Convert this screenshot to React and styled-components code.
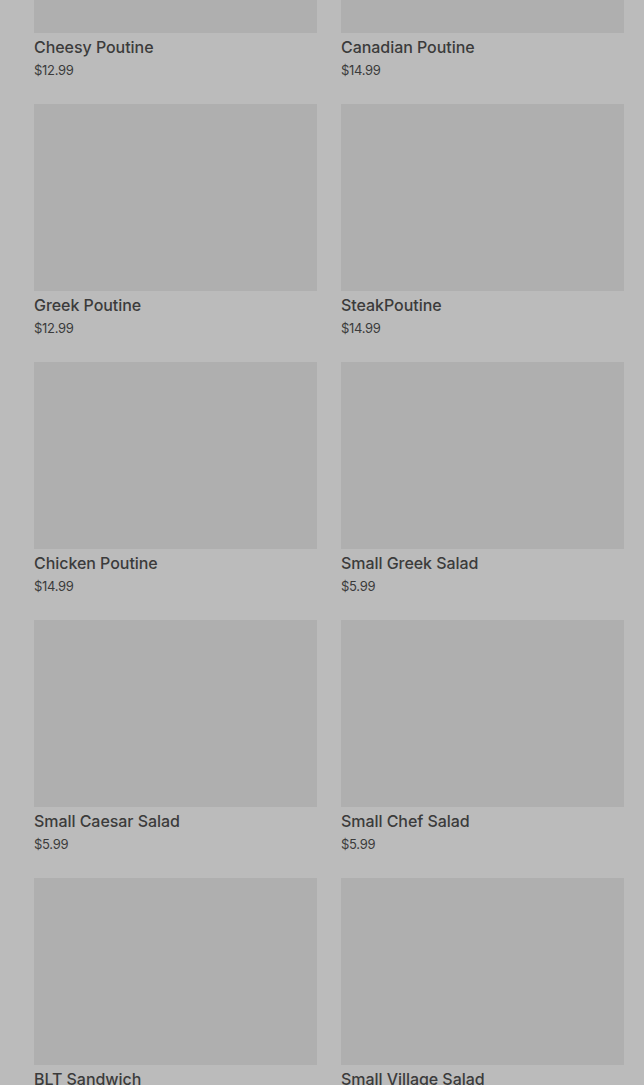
import React from 'react';
import styled, { createGlobalStyle } from 'styled-components';

const GlobalStyle = createGlobalStyle`
  html, body {
    margin: 0;
    padding: 0;
    background: #bbbbbb;
    overflow: hidden;
  }
  body {
    font-family: Inter, Roboto, "Liberation Sans", sans-serif;
  }
`;

const Page = styled.div`
  height: 1085px;
  overflow: hidden;
  padding: 0 20px 0 34px;
`;

const Grid = styled.div`
  display: grid;
  grid-template-columns: 283px 283px;
  column-gap: 24px;
  row-gap: 24px;
  margin-top: -154px;
`;

const Card = styled.div`
  display: flex;
  flex-direction: column;
`;

const Picture = styled.div`
  height: 187px;
  background: #afafaf;
`;

const Title = styled.div`
  margin-top: 4px;
  font-size: 16px;
  line-height: 20px;
  font-weight: 500;
  color: #3b3b3b;
  letter-spacing: -0.05px;
`;

const Price = styled.div`
  margin-top: 3px;
  font-size: 13px;
  line-height: 20px;
  color: #3b3b3b;
  letter-spacing: -0.3px;
`;

const items = [
  ['Cheesy Poutine', '$12.99'],
  ['Canadian Poutine', '$14.99'],
  ['Greek Poutine', '$12.99'],
  ['SteakPoutine', '$14.99'],
  ['Chicken Poutine', '$14.99'],
  ['Small Greek Salad', '$5.99'],
  ['Small Caesar Salad', '$5.99'],
  ['Small Chef Salad', '$5.99'],
  ['BLT Sandwich', '$7.99'],
  ['Small Village Salad', '$5.99'],
];

const App = () => (
  <>
    <GlobalStyle />
    <Page>
      <Grid>
        {items.map(([name, price]) => (
          <Card key={name}>
            <Picture />
            <Title>{name}</Title>
            <Price>{price}</Price>
          </Card>
        ))}
      </Grid>
    </Page>
  </>
);

export default App;
